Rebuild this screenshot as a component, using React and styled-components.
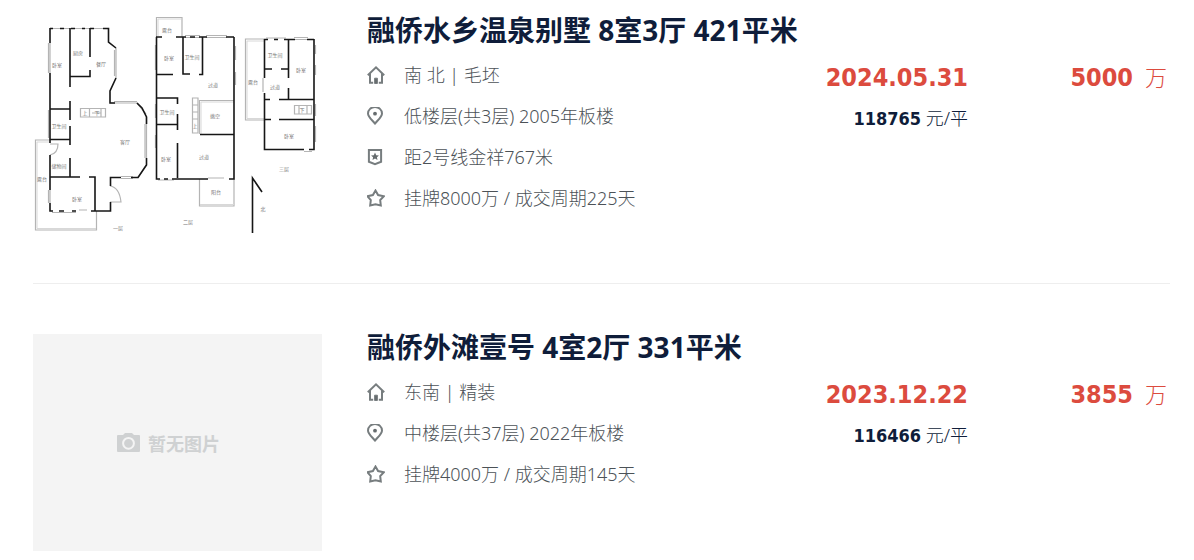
import styled, { createGlobalStyle } from 'styled-components'

const listings = [
    {
        id: 1,
        title: '融侨水乡温泉别墅 8室3厅 421平米',
        details: [
            { icon: 'house', text: '南 北 | 毛坯' },
            { icon: 'pin', text: '低楼层(共3层) 2005年板楼' },
            { icon: 'metro', text: '距2号线金祥767米' },
            { icon: 'star', text: '挂牌8000万 / 成交周期225天' },
        ],
        date: '2024.05.31',
        unitPrice: '118765',
        total: '5000',
        hasPlan: true,
    },
    {
        id: 2,
        title: '融侨外滩壹号 4室2厅 331平米',
        details: [
            { icon: 'house', text: '东南 | 精装' },
            { icon: 'pin', text: '中楼层(共37层) 2022年板楼' },
            { icon: 'star', text: '挂牌4000万 / 成交周期145天' },
        ],
        date: '2023.12.22',
        unitPrice: '116466',
        total: '3855',
        hasPlan: false,
    },
]

const rooms = [
    ['卧室', 57, 64], ['厨房', 78, 52], ['餐厅', 101, 63], ['卫生间', 59, 125],
    ['客厅', 125, 141], ['储物间', 59, 165], ['露台', 42, 178], ['卧室', 77, 198],
    ['一层', 118, 227], ['露台', 167, 29], ['卧室', 169, 57], ['卫生间', 192, 56],
    ['过道', 213, 84], ['卫生间', 167, 111], ['挑空', 215, 115], ['卧室', 166, 158],
    ['过道', 204, 156], ['阳台', 216, 191], ['二层', 188, 221], ['卫生间', 275, 54],
    ['卧室', 301, 69], ['露台', 253, 81], ['过道', 275, 86], ['卧室', 289, 135],
    ['三层', 284, 168], ['北', 263, 208], ['上', 85, 112], ['下', 97, 112],
    ['上', 195, 125], ['下', 302, 109],
]

const FloorPlan = () => (
    <PlanSvg viewBox="33 17 289 217" role="img" aria-label="户型图">
        {/* balconies, windows and stairs */}
        <g fill="none" stroke="#b4b4b4" strokeWidth="1.2">
            <path d="M50 140H35.5V230H96.500V211" />
            <path d="M52 28.500H108M48.500 43V73M50 43V73M48.500 110V138M48.500 190V203M50 190V203M116 48V78M114.500 50V76M110 103H137L146 114M114 101.500H137M146.500 117V158M145 124V158" />
            <path d="M52 212.500H76M79 210H87M121 178.500H133M121 176.500H133M138 178L146 165" />
            <path d="M50 144H58C58 150 55 154 50 155M110 186C117 187 120 193 121 202H110" />
            <path d="M80.500 108.500H105.500V117H80.500ZM89.500 108.500V117M101 108.500V117M92 113H101" />
            <path d="M156.500 37V17.500H182V37M185 35.500H200M185 37.500H200M206 35.500H227M206 37.500H227M155.500 45V70M155.500 104V118M155.500 135V148M235.500 46V60M235.500 72V85" />
            <path d="M199.500 134V100.500H234M158 180H174M199.500 179V206H234V179M208 178H224" />
            <path d="M192.500 98V133H198V98ZM192.500 105H198M192.500 112H198M192.500 119H198" />
            <path d="M264 39H245.500V120H264M266 38H286M294 37.500H308M294 39.500H308M315.500 45V54M315.500 65V75M315.500 104V116M315.500 126V142M263 78V92M304 151.500H312" />
            <path d="M294.500 105.500H311.500V114H294.500ZM299 105.500V114M307 105.500V114" />
        </g>
        {/* second lines of the balcony rails */}
        <g fill="none" stroke="#d8d8d8" strokeWidth="1">
            <path d="M50 142H37V228.500H96M158 36V19H181M201 134V102H234M200 204.500H234M264 41H247V118.500H264" />
        </g>
        {/* walls */}
        <g fill="none" stroke="#161616" strokeWidth="1.6">
            <path d="M50 28V43M50 73V143M50 155V190M50 203V211H53M59 211H64M72 211H76M50 28.500H53M60 28.500H64M71 28.500H75M82 28.500H85M90 28.500H94M103 28.500H108.500V42L116 48" />
            <path d="M70 28V87M70 101V120M70 126V145M70 158V177M90 28V57M90 70V76.500H70M50 109H70M50 139.500H70" />
            <path d="M116 78L110 91V103H115M137 103L142 108L146.500 117V124M146.500 158V165L138 177.500H131M121 177.500H110.500V186M110.500 202V211H91" />
            <path d="M50 177H80M89 177H95V211" />
            <path d="M156.500 37V179H160M164 179H168M172 179H208M229 179H234V37M156 37H162M176 37H186M190 37H195M199 37H207M226 37H234" />
            <path d="M183 37V74H190M199 74.500H202.500V37M156 74.500H173M156 98H177.500V104M177.500 114V130M177.500 143V178M156 124.500H178M200 134.500H234" />
            <path d="M264.500 39V78M264.500 93V149.500H304M309 149.500H314V39M264 39.500H268M274 39.500H278M284 39.500H295M307 39.500H314" />
            <path d="M264 69H272M281 69H288.500M288.500 39V78M288.500 88V99M264 99.500H270M279 99.500H314M264 119.500H271M279 119.500H314" />
            <path d="M252.500 233V178L262 192" />
        </g>
        {rooms.map(([name, x, y]) => (
            <RoomName key={`${x}-${y}`} x={x} y={y}>{name}</RoomName>
        ))}
    </PlanSvg>
)

const Icon = ({ name }) => (
    <IconSvg viewBox="0 0 18 18" aria-hidden="true">
        {name === 'house' && (
            <>
                <path d="M.8 9.200L9 1.400L17.200 9.200M3 7.500V16.800H6.200M15 7.500V16.800H11.800" />
                <path d="M7.600 17.500V12.200H10.400V17.500Z" fill="#666c6e" strokeWidth="1" />
            </>
        )}
        {name === 'pin' && (
            <>
                <path d="M8 16.500C5 13 1 9.900 1 6.400A7 6.400 0 0 1 15 6.400C15 9.900 11 13 8 16.500Z" />
                <circle cx="8" cy="6.700" r="1.900" fill="#666c6e" stroke="none" />
            </>
        )}
        {name === 'metro' && (
            <>
                <path d="M1.900 1.900H14.100V13.800L8 16.200L1.900 13.800Z" />
                <path d="M8 4.600L9.200 7.200L12 7.500L9.900 9.300L10.500 12L8 10.600L5.500 12L6.100 9.300L4 7.500L6.800 7.200Z" fill="#666c6e" stroke="none" />
            </>
        )}
        {name === 'star' && (
            <path d="M8.500 1.500L11.100 6L16.800 7.200L13.200 11L13.800 16.400L8.500 15.200L3.200 16.400L3.800 11L.4 7.200L5.900 6Z" />
        )}
    </IconSvg>
)

const NoPicture = () => (
    <Placeholder>
        <CameraSvg viewBox="0 0 23 19" aria-hidden="true">
            <path d="M1 2H6L8 0H15L17 2H22Q23 2 23 3V18Q23 19 22 19H1Q0 19 0 18V3Q0 2 1 2Z" fill="#cfd1d2" />
            <circle cx="11.500" cy="10.300" r="5.400" fill="#cfd1d2" stroke="#f4f4f4" strokeWidth="2" />
        </CameraSvg>
        暂无图片
    </Placeholder>
)

const Listing = ({ item }) => (
    <Item>
        <Thumb>{item.hasPlan ? <FloorPlan /> : <NoPicture />}</Thumb>
        <Info>
            <Title><a href="#">{item.title}</a></Title>
            <Details>
                {item.details.map((detail) => (
                    <Detail key={detail.text}>
                        <Icon name={detail.icon} />
                        {detail.text}
                    </Detail>
                ))}
            </Details>
        </Info>
        <Deal>
            <Strong>{item.date}</Strong>
            <UnitPrice><b>{item.unitPrice}</b> 元/平</UnitPrice>
        </Deal>
        <Total>
            <Strong>{item.total}</Strong>
            <Unit>万</Unit>
        </Total>
    </Item>
)

export default function App() {
    return (
        <>
            <GlobalStyle />
            <List>
                {listings.map((item) => <Listing key={item.id} item={item} />)}
            </List>
        </>
    )
}

const GlobalStyle = createGlobalStyle`
  * {
    box-sizing: border-box;
  }

  body {
    margin: 0;
    background: #fff;
    color: #0f1d3a;
    font-family: "Noto Sans", "Noto Sans CJK SC", sans-serif;
  }
`

const List = styled.ul`
  margin: 0;
  padding: 0 24px 0 33px;
  list-style: none;
`

const Item = styled.li`
  display: flex;
  align-items: flex-start;
  padding: 50px 0 49px;
  border-bottom: 1px solid #eee;

  &:first-child {
    padding-top: 17px;
  }

  &:last-child {
    padding-bottom: 8px;
    border-bottom: 0;
  }
`

const Thumb = styled.div`
  flex: none;
  width: 289px;
  height: 217px;
  margin-right: 45px;
`

const PlanSvg = styled.svg`
  display: block;
  width: 100%;
  height: 100%;
`

const RoomName = styled.text`
  fill: #777;
  font-family: "Noto Sans CJK SC", sans-serif;
  font-size: 5px;
  text-anchor: middle;
  dominant-baseline: central;
`

const Placeholder = styled.div`
  display: flex;
  align-items: center;
  justify-content: center;
  gap: 8px;
  width: 100%;
  height: 100%;
  padding-right: 18px;
  background: #f4f4f4;
  color: #cfd1d2;
  font-size: 18px;
  font-weight: bold;
`

const CameraSvg = styled.svg`
  width: 23px;
  height: 19px;
`

const Info = styled.div`
  flex: 1;
  min-width: 0;
`

const Title = styled.h2`
  margin: 0;
  font-size: 28px;
  font-weight: bold;
  line-height: 26px;
  white-space: nowrap;

  a {
    color: inherit;
    text-decoration: none;
  }
`

const Details = styled.ul`
  display: flex;
  flex-direction: column;
  gap: 17px;
  margin: 20px 0 0;
  padding: 0;
  list-style: none;
`

const Detail = styled.li`
  display: flex;
  align-items: center;
  gap: 19px;
  color: #4c5257;
  font-size: 18px;
  font-weight: 300;
  line-height: 24px;
  white-space: nowrap;
`

const IconSvg = styled.svg`
  flex: none;
  width: 18px;
  height: 18px;
  fill: none;
  stroke: #777d7f;
  stroke-width: 2;
`

const Deal = styled.div`
  display: flex;
  flex-direction: column;
  align-items: flex-end;
  gap: 16px;
  padding-top: 49px;
  line-height: 24px;
`

const Strong = styled.strong`
  color: #dc4b3e;
  font-family: "DejaVu Sans Condensed", "DejaVu Sans", sans-serif;
  font-size: 25px;
  line-height: 24px;
`

const UnitPrice = styled.div`
  font-size: 18px;
  font-weight: 300;

  b {
    font-family: "DejaVu Sans Condensed", "DejaVu Sans", sans-serif;
    font-weight: bold;
  }
`

const Total = styled.div`
  display: flex;
  align-items: baseline;
  justify-content: flex-end;
  gap: 12px;
  width: 202px;
  padding: 48px 3px 0 0;
`

const Unit = styled.span`
  color: #dc4b3e;
  font-size: 22px;
  font-weight: 300;
  line-height: 24px;
`
